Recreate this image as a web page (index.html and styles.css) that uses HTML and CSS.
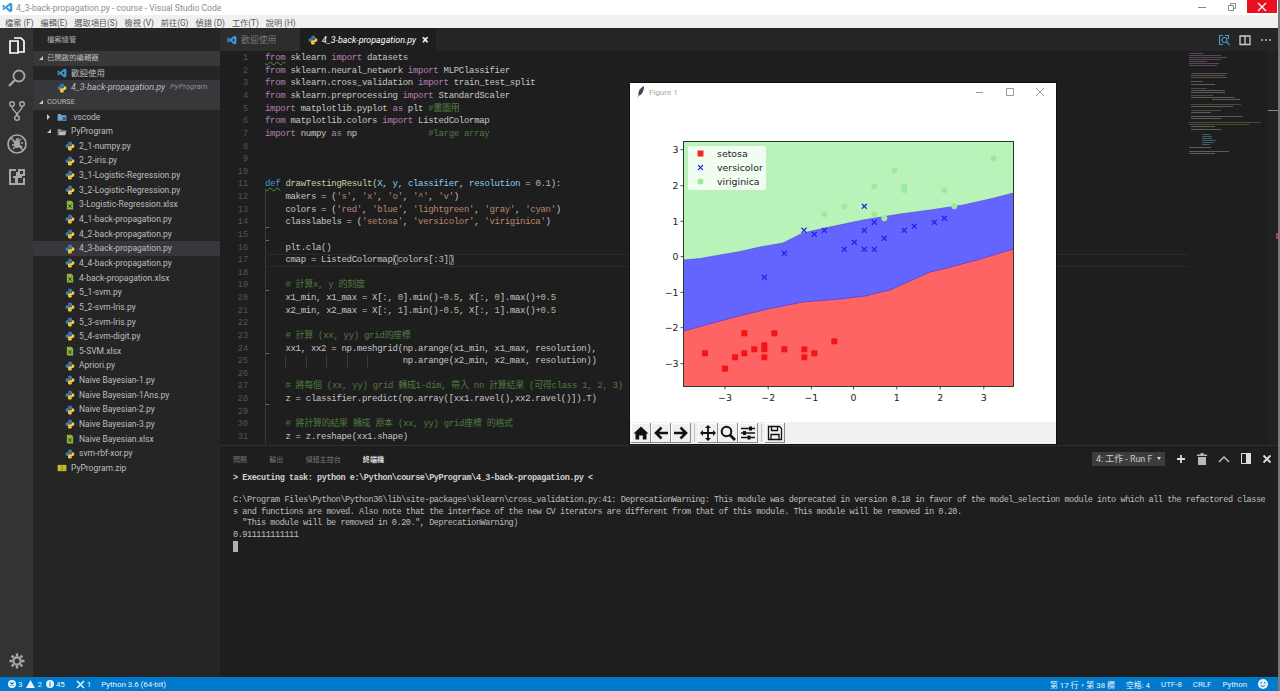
FILE: index.html
```html
<!DOCTYPE html>
<html lang="zh-Hant">
<head>
    <meta charset="UTF-8">
    <title>4_3-back-propagation.py - course - Visual Studio Code</title>
    <link rel="stylesheet" href="styles.css">
</head>
<body>
    <!-- shared icons -->
    <svg class="defs" aria-hidden="true">
        <symbol id="py" viewBox="0 0 16 16">
            <path fill="#3f7fb5" d="M8 1C5.400 1 5 2 5 3v1.500h3.200V5H3.400C2 5 1 6.200 1 8s1 3 2.300 3h1.300V9.600c0-1.200.9-2 2-2h2.900c1 0 1.600-.7 1.600-1.600V3c0-1.200-1.200-2-3.100-2z"/>
            <path fill="#f5cf3c" d="M8 15c2.600 0 3-1 3-2v-1.500H7.800V11h4.800c1.400 0 2.400-1.200 2.400-3s-1-3-2.300-3h-1.300v1.400c0 1.200-.9 2-2 2H6.500c-1 0-1.600.7-1.600 1.600V13c0 1.200 1.200 2 3.100 2z"/>
        </symbol>
        <symbol id="xl" viewBox="0 0 16 16">
            <path fill="#8bb53f" d="M3 1h7l3 3v11H3z"/>
            <path stroke="#25361a" stroke-width="1.500" d="M5.500 7l5 5.500M10.500 7l-5 5.500"/>
        </symbol>
        <symbol id="vs" viewBox="0 0 16 16">
            <path fill="#3d9ad9" d="M11.500 1L15 2.500v11L11.500 15 5 9.500 2 12 1 11.300V4.700L2 4l3 2.500zM11.500 5L8 8l3.500 3zM2.500 6.500v3L4 8z"/>
        </symbol>
        <symbol id="x" viewBox="-3 -3 6 6">
            <path stroke="#2222e8" stroke-width="1.300" d="M-2.600-2.600L2.600 2.600M-2.600 2.600L2.600-2.600"/>
        </symbol>
    </svg>

    <div class="app">
        <div class="titlebar">
            <svg class="title-icon"><use href="#vs"/></svg>
            <span class="title-text">4_3-back-propagation.py - course - Visual Studio Code</span>
            <div class="win-btns">
                <span class="win-btn"><svg width="10" height="10"><path stroke="#888" d="M1 5.500h8"/></svg></span>
                <span class="win-btn"><svg width="10" height="10" fill="none"><path stroke="#888" d="M1.500 3.500h5v5h-5zM3.500 3V1.500h5v5H7"/></svg></span>
                <span class="win-btn win-close"><svg width="10" height="10"><path stroke="#fff" stroke-width="1.200" d="M1 1l8 8M9 1L1 9"/></svg></span>
            </div>
        </div>
        <div class="menubar">
            <span>檔案 (F)</span><span>編輯(E)</span><span>選取項目(S)</span><span>檢視 (V)</span><span>前往(G)</span><span>偵錯 (D)</span><span>工作(T)</span><span>說明 (H)</span>
        </div>

        <div class="main">
            <div class="activity">
                <div class="act-item act-on">
                    <svg width="20" height="20" fill="none" stroke="currentColor" stroke-width="1.700"><path d="M7 3h7l3 3v11H11M3 6h8v12H3z"/></svg>
                </div>
                <div class="act-item">
                    <svg width="20" height="20" fill="none" stroke="currentColor" stroke-width="1.800"><circle cx="12" cy="8" r="5.500"/><path d="M8 12l-6 6" stroke-width="2.400"/></svg>
                </div>
                <div class="act-item">
                    <svg width="20" height="22" fill="none" stroke="currentColor" stroke-width="1.500"><circle cx="5" cy="4" r="2.300"/><circle cx="15" cy="4" r="2.300"/><circle cx="10" cy="18" r="2.300"/><path d="M5 6.500c0 5 5 4 5 9.200M15 6.500c0 5-5 4-5 9.200"/></svg>
                </div>
                <div class="act-item">
                    <svg width="22" height="22" fill="none" stroke="currentColor"><circle cx="11" cy="11" r="9" stroke-width="1.700"/><path stroke-width="1.500" d="M5 5l12 12M7 8l2 1M6 12h3M7 16l2-2M15 6l-2 2M13 5.500l-3 1M17 10h-2M16 14l-2-1"/><ellipse cx="11" cy="11" rx="3" ry="4" fill="currentColor" stroke="none"/></svg>
                </div>
                <div class="act-item">
                    <svg width="20" height="20" fill="currentColor"><path fill-rule="evenodd" d="M2 2h7v3h2V2h7v7h-3v2h3v7H2zM4 4v12h4v-5H6V9h3V4zM11 11v5h5v-5zM13 4v3h3V4z"/></svg>
                </div>
                <div class="act-item act-gear">
                    <svg width="16" height="16" fill="none" stroke="currentColor"><circle cx="8" cy="8" r="3.600" stroke-width="2.200"/><path stroke-width="2.400" d="M8 .5v3M8 12.500v3M.5 8h3M12.500 8h3M2.700 2.700l2 2M11.300 11.300l2 2M2.700 13.300l2-2M11.300 4.700l2-2"/></svg>
                </div>
            </div>

            <div class="sidebar">
                <div class="side-head">檔案總管</div>
                <div class="section"><i class="arrow-open"></i>已開啟的編輯器</div>
                <div class="row lv1"><svg class="ico"><use href="#vs"/></svg>歡迎使用</div>
                <div class="row lv1 row-on open-file"><svg class="ico"><use href="#py"/></svg>4_3-back-propagation.py<span class="row-dir">PyProgram</span></div>
                <div class="section"><i class="arrow-open"></i>COURSE</div>
                <div class="row lv1"><i class="arrow-closed"></i><svg class="ico" viewBox="0 0 16 16"><path fill="#6aa9dc" d="M1 3h5l1 2h8v9H1z"/><path fill="#2d5f8c" d="M9 8h5v5H9z"/></svg>.vscode</div>
                <div class="row lv1"><i class="arrow-open"></i><svg class="ico" viewBox="0 0 16 16"><path fill="#8a8a8a" d="M1 3h5l1 2h8v2H4l-2 6H1z"/><path fill="#bdbdbd" d="M4 7h11l-2 6H2z"/></svg>PyProgram</div>
                <div class="row lv2"><svg class="ico"><use href="#py"/></svg>2_1-numpy.py</div>
                <div class="row lv2"><svg class="ico"><use href="#py"/></svg>2_2-iris.py</div>
                <div class="row lv2"><svg class="ico"><use href="#py"/></svg>3_1-Logistic-Regression.py</div>
                <div class="row lv2"><svg class="ico"><use href="#py"/></svg>3_2-Logistic-Regression.py</div>
                <div class="row lv2"><svg class="ico"><use href="#xl"/></svg>3-Logistic-Regression.xlsx</div>
                <div class="row lv2"><svg class="ico"><use href="#py"/></svg>4_1-back-propagation.py</div>
                <div class="row lv2"><svg class="ico"><use href="#py"/></svg>4_2-back-propagation.py</div>
                <div class="row lv2 row-on"><svg class="ico"><use href="#py"/></svg>4_3-back-propagation.py</div>
                <div class="row lv2"><svg class="ico"><use href="#py"/></svg>4_4-back-propagation.py</div>
                <div class="row lv2"><svg class="ico"><use href="#xl"/></svg>4-back-propagation.xlsx</div>
                <div class="row lv2"><svg class="ico"><use href="#py"/></svg>5_1-svm.py</div>
                <div class="row lv2"><svg class="ico"><use href="#py"/></svg>5_2-svm-Iris.py</div>
                <div class="row lv2"><svg class="ico"><use href="#py"/></svg>5_3-svm-Iris.py</div>
                <div class="row lv2"><svg class="ico"><use href="#py"/></svg>5_4-svm-digit.py</div>
                <div class="row lv2"><svg class="ico"><use href="#xl"/></svg>5-SVM.xlsx</div>
                <div class="row lv2"><svg class="ico"><use href="#py"/></svg>Apriori.py</div>
                <div class="row lv2"><svg class="ico"><use href="#py"/></svg>Naive Bayesian-1.py</div>
                <div class="row lv2"><svg class="ico"><use href="#py"/></svg>Naive Bayesian-1Ans.py</div>
                <div class="row lv2"><svg class="ico"><use href="#py"/></svg>Naive Bayesian-2.py</div>
                <div class="row lv2"><svg class="ico"><use href="#py"/></svg>Naive Bayesian-3.py</div>
                <div class="row lv2"><svg class="ico"><use href="#xl"/></svg>Naive Bayesian.xlsx</div>
                <div class="row lv2"><svg class="ico"><use href="#py"/></svg>svm-rbf-xor.py</div>
                <div class="row lv1"><svg class="ico" viewBox="0 0 16 16"><path fill="#c9b52e" d="M1 3h14v10H1z"/><path fill="#5c5214" d="M7 5h2v1H7zM7 7h2v1H7zM7 9h2v2H7z"/></svg>PyProgram.zip</div>
            </div>

            <div class="workbench">
                <div class="tabs">
                    <div class="tab"><svg class="ico"><use href="#vs"/></svg>歡迎使用</div>
                    <div class="tab tab-on"><svg class="ico"><use href="#py"/></svg>4_3-back-propagation.py<span class="tab-x">×</span></div>
                    <div class="tab-actions">
                        <svg width="12" height="12" fill="none" stroke="#4b9ac9" stroke-width="1.100"><path d="M5 1.500H1.500v9H5M7 1.500h3.500V5"/><circle cx="6.500" cy="6" r="2.500"/><path d="M8.500 8l3 3"/></svg>
                        <svg width="12" height="12" fill="none" stroke="#ccc" stroke-width="1.300"><path d="M1 2h10v8.500H1zM6 2v8.500"/></svg>
                        <svg width="12" height="12" fill="#bbb"><circle cx="2" cy="6" r="1"/><circle cx="6" cy="6" r="1"/><circle cx="10" cy="6" r="1"/></svg>
                    </div>
                </div>

                <div class="editor">
                    <div class="code">
<div class="line"><span class="num">1</span><code><span class="k sq">from</span> sklearn <span class="k">import</span> datasets</code></div>
<div class="line"><span class="num">2</span><code><span class="k">from</span> sklearn.neural_network <span class="k">import</span> MLPClassifier</code></div>
<div class="line"><span class="num">3</span><code><span class="k">from</span> sklearn.cross_validation <span class="k">import</span> train_test_split</code></div>
<div class="line"><span class="num">4</span><code><span class="k">from</span> sklearn.preprocessing <span class="k">import</span> StandardScaler</code></div>
<div class="line"><span class="num">5</span><code><span class="k">import</span> matplotlib.pyplot <span class="k">as</span> plt <span class="c">#畫圖用</span></code></div>
<div class="line"><span class="num">6</span><code><span class="k">from</span> matplotlib.colors <span class="k">import</span> ListedColormap</code></div>
<div class="line"><span class="num">7</span><code><span class="k">import</span> numpy <span class="k">as</span> np              <span class="c">#large array</span></code></div>
<div class="line"><span class="num">8</span><code></code></div>
<div class="line"><span class="num">9</span><code></code></div>
<div class="line"><span class="num">10</span><code></code></div>
<div class="line"><span class="num">11</span><code><span class="d sq">def</span> <span class="f">drawTestingResult</span>(<span class="p">X</span>, <span class="p">y</span>, <span class="p">classifier</span>, <span class="p">resolution</span> = <span class="n">0.1</span>):</code></div>
<div class="line"><span class="num">12</span><code><span class="g">    </span>makers = (<span class="s">'s'</span>, <span class="s">'x'</span>, <span class="s">'o'</span>, <span class="s">'^'</span>, <span class="s">'v'</span>)</code></div>
<div class="line"><span class="num">13</span><code><span class="g">    </span>colors = (<span class="s">'red'</span>, <span class="s">'blue'</span>, <span class="s">'lightgreen'</span>, <span class="s">'gray'</span>, <span class="s">'cyan'</span>)</code></div>
<div class="line"><span class="num">14</span><code><span class="g tick">    </span>classlabels = (<span class="s">'setosa'</span>, <span class="s">'versicolor'</span>, <span class="s">'viriginica'</span>)</code></div>
<div class="line"><span class="num">15</span><code><span class="g tick">    </span></code></div>
<div class="line"><span class="num">16</span><code><span class="g">    </span>plt.cla()</code></div>
<div class="line line-on"><span class="num">17</span><code><span class="g">    </span>cmap = ListedColormap<span class="br">(</span>colors[:<span class="n">3</span>]<span class="br">)</span></code></div>
<div class="line"><span class="num">18</span><code><span class="g">    </span></code></div>
<div class="line"><span class="num">19</span><code><span class="g tick">    </span><span class="c"># 計算x, y 的刻度</span></code></div>
<div class="line"><span class="num">20</span><code><span class="g">    </span>x1_min, x1_max = X[:, <span class="n">0</span>].min()-<span class="n">0.5</span>, X[:, <span class="n">0</span>].max()+<span class="n">0.5</span></code></div>
<div class="line"><span class="num">21</span><code><span class="g">    </span>x2_min, x2_max = X[:, <span class="n">1</span>].min()-<span class="n">0.5</span>, X[:, <span class="n">1</span>].max()+<span class="n">0.5</span></code></div>
<div class="line"><span class="num">22</span><code><span class="g">    </span></code></div>
<div class="line"><span class="num">23</span><code><span class="g">    </span><span class="c"># 計算 (xx, yy) grid的座標</span></code></div>
<div class="line"><span class="num">24</span><code><span class="g tick">    </span>xx1, xx2 = np.meshgrid(np.arange(x1_min, x1_max, resolution),</code></div>
<div class="line"><span class="num">25</span><code><span class="g">    </span><span class="g">    </span><span class="g">    </span><span class="g">    </span><span class="g">    </span><span class="g">    </span>   np.arange(x2_min, x2_max, resolution))</code></div>
<div class="line"><span class="num">26</span><code><span class="g">    </span></code></div>
<div class="line"><span class="num">27</span><code><span class="g">    </span><span class="c"># 將每個 (xx, yy) grid 轉成1-dim, 帶入 nn 計算結果 (可得class 1, 2, 3)</span></code></div>
<div class="line"><span class="num">28</span><code><span class="g tick">    </span>z = classifier.predict(np.array([xx1.ravel(),xx2.ravel()]).T)</code></div>
<div class="line"><span class="num">29</span><code><span class="g">    </span></code></div>
<div class="line"><span class="num">30</span><code><span class="g">    </span><span class="c"># 將計算的結果 轉成 原本 (xx, yy) grid座標 的格式</span></code></div>
<div class="line"><span class="num">31</span><code><span class="g">    </span>z = z.reshape(xx1.shape)</code></div>
                    </div>
                    <svg class="minimap" width="80" height="110">
                        <g fill="#8a6a86"><rect x="1" y="2" width="14" height="1"/><rect x="1" y="4" width="32" height="1"/><rect x="1" y="6" width="38" height="1"/><rect x="1" y="8" width="32" height="1"/><rect x="1" y="10" width="18" height="1"/><rect x="1" y="12" width="30" height="1"/><rect x="1" y="14" width="28" height="1"/></g>
                        <g fill="#8f7a6c"><rect x="3" y="22" width="36" height="1"/><rect x="3" y="24" width="34" height="1"/><rect x="3" y="26" width="36" height="1"/></g>
                        <g fill="#909090"><rect x="3" y="30" width="12" height="1"/><rect x="3" y="33" width="24" height="1"/><rect x="3" y="39" width="34" height="1"/><rect x="3" y="41" width="34" height="1"/><rect x="3" y="46" width="44" height="1"/><rect x="24" y="48" width="28" height="1"/></g>
                        <g fill="#5e7a4c"><rect x="3" y="37" width="16" height="1"/><rect x="3" y="44" width="22" height="1"/><rect x="3" y="53" width="50" height="1"/><rect x="3" y="59" width="30" height="1"/></g>
                        <g fill="#909090"><rect x="3" y="55" width="42" height="1"/><rect x="3" y="61" width="20" height="1"/><rect x="3" y="65" width="52" height="1"/><rect x="3" y="67" width="30" height="1"/><rect x="3" y="75" width="24" height="1"/><rect x="3" y="78" width="30" height="1"/></g>
                        <g fill="#5e7a4c"><rect x="1" y="71" width="72" height="1"/><rect x="1" y="73" width="60" height="1"/></g>
                        <g fill="#5a8fb0"><rect x="14" y="83" width="8" height="1"/><rect x="14" y="85" width="10" height="1"/><rect x="14" y="87" width="10" height="1"/><rect x="14" y="89" width="14" height="1"/><rect x="14" y="91" width="12" height="1"/><rect x="14" y="93" width="8" height="1"/></g>
                        <g fill="#909090"><rect x="1" y="96" width="22" height="1"/><rect x="1" y="100" width="40" height="1"/><rect x="1" y="102" width="26" height="1"/></g>
                    </svg>
                    <div class="ruler">
                        <i class="ruler-cur"></i>
                        <i class="ruler-mark"></i>
                    </div>
                </div>

                <div class="panel">
                    <div class="panel-head">
                        <span>問題</span><span>輸出</span><span>偵錯主控台</span><span class="panel-on">終端機</span>
                        <div class="panel-actions">
                            <span class="term-select">4: 工作 - Run F<i></i></span>
                            <svg width="10" height="10" stroke="#ddd" stroke-width="1.800"><path d="M5 1v8M1 5h8"/></svg>
                            <svg width="10" height="12" fill="#bbb"><path d="M3.500 0h3v1.500H10v1.500H0V1.500h3.500zM1 4h8v8H1z"/></svg>
                            <svg width="12" height="8" fill="none" stroke="#ccc" stroke-width="1.300"><path d="M1 7l5-5 5 5"/></svg>
                            <svg width="10" height="11" fill="#ddd"><path fill-rule="evenodd" d="M0 0h10v11H0zM1 1v9h4V1z"/></svg>
                            <svg width="10" height="10" stroke="#ddd" stroke-width="1.800"><path d="M1.500 1.500l7 7M8.500 1.500l-7 7"/></svg>
                        </div>
                    </div>
<pre class="terminal"><b>&gt; Executing task: python e:\Python\course\PyProgram\4_3-back-propagation.py &lt;</b>

C:\Program Files\Python\Python36\lib\site-packages\sklearn\cross_validation.py:41: DeprecationWarning: This module was deprecated in version 0.18 in favor of the model_selection module into which all the refactored classe
s and functions are moved. Also note that the interface of the new CV iterators are different from that of this module. This module will be removed in 0.20.
  "This module will be removed in 0.20.", DeprecationWarning)
0.911111111111
<i class="term-cursor"></i></pre>
                </div>
            </div>
        </div>

        <div class="statusbar">
            <span class="st-group">
                <svg width="8" height="8"><circle cx="4" cy="4" r="4" fill="#e8f2fa"/><path stroke="#007acc" stroke-width="1.200" d="M2.500 2.500l3 3M5.500 2.500l-3 3"/></svg>3
                <svg width="9" height="8"><path fill="#e8f2fa" d="M4.500 0L9 8H0z"/></svg>2
                <svg width="8" height="8"><circle cx="4" cy="4" r="4" fill="#e8f2fa"/><path stroke="#007acc" d="M4 3v3.500M4 1.500v1"/></svg>45
            </span>
            <span class="st-group st-tools">
                <svg width="9" height="9" stroke="#e8f2fa" stroke-width="1.500"><path d="M1 1l7 7M8 1L1 8"/></svg>1
            </span>
            <span class="st-python">Python 3.6 (64-bit)</span>
            <div class="st-right">
                <span>第 17 行，第 38 欄</span><span>空格: 4</span><span>UTF-8</span><span>CRLF</span><span>Python</span>
                <svg width="10" height="10"><circle cx="5" cy="5" r="5" fill="#e8f2fa"/><circle cx="3.400" cy="3.800" r=".8" fill="#007acc"/><circle cx="6.600" cy="3.800" r=".8" fill="#007acc"/><path fill="none" stroke="#007acc" d="M2.500 6c1 1.800 4 1.800 5 0"/></svg>
            </div>
        </div>
    </div>

    <!-- matplotlib window floats over the editor -->
    <div class="figure">
        <div class="fig-title">
            <svg width="8" height="12"><path fill="#3a4a5c" d="M7 0C3 2 1 5 1.500 9L.5 12l1.500-2.500C5 9 7 5 7 0z"/></svg>
            <span>Figure 1</span>
            <div class="fig-btns">
                <svg width="10" height="10"><path stroke="#999" d="M1 5.500h7"/></svg>
                <svg width="10" height="10" fill="none"><path stroke="#999" d="M1.500 1.500h7v7h-7z"/></svg>
                <svg width="10" height="10"><path stroke="#999" d="M1 1l8 8M9 1L1 9"/></svg>
            </div>
        </div>
        <!-- viewBox uses the coordinates of the whole window -->
        <svg class="plot" viewBox="630 101 426 321" width="426" height="321">
            <rect x="683.500" y="141.500" width="330" height="245" fill="#b9f3b9"/>
            <path fill="#6464fe" stroke="#4a4ae0" stroke-width=".6" d="M683.500 260L700 258.500 720 255 740 251.500 760 247 783 243 803 233 825 228 863 220 900 214 930 210 963 205 990 199 1013.500 193V386.500H683.500z"/>
            <path fill="#ff6464" d="M683.500 331L700 326.500 720 321 743 315 770 308.500 803 302 840 299 865 296 890 290 910 281 930 272 945 268.500 977 260 1000 253 1013.500 249V386.500H683.500z"/>
            <path fill="none" stroke="#5b3fd0" stroke-width=".8" d="M683.500 331L700 326.500 720 321 743 315 770 308.500 803 302 840 299 865 296 890 290 910 281 930 272 945 268.500 977 260 1000 253 1013.500 249"/>
            <g fill="#9dea9d">
                <circle cx="824.300" cy="214.300" r="3"/><circle cx="844.300" cy="206.300" r="3"/><circle cx="874.300" cy="186.300" r="3"/><circle cx="874.300" cy="214.300" r="3"/><circle cx="884.300" cy="218.300" r="3"/><circle cx="894.300" cy="170.300" r="3"/><circle cx="904.300" cy="186.300" r="3"/><circle cx="904.300" cy="190.300" r="3"/><circle cx="944.300" cy="190.300" r="3"/><circle cx="954.300" cy="206.300" r="3"/><circle cx="993.700" cy="158.300" r="3"/>
            </g>
            <g>
                <use href="#x" x="781.300" y="250.300" width="6" height="6"/><use href="#x" x="801" y="227.300" width="6" height="6"/><use href="#x" x="811.300" y="231.300" width="6" height="6"/><use href="#x" x="821.300" y="227.300" width="6" height="6"/><use href="#x" x="841.300" y="246.300" width="6" height="6"/><use href="#x" x="851.300" y="239.300" width="6" height="6"/><use href="#x" x="861.300" y="203.300" width="6" height="6"/><use href="#x" x="861.300" y="227.300" width="6" height="6"/><use href="#x" x="861.300" y="246.300" width="6" height="6"/><use href="#x" x="871.300" y="219.300" width="6" height="6"/><use href="#x" x="871.300" y="246.300" width="6" height="6"/><use href="#x" x="881.300" y="235.300" width="6" height="6"/><use href="#x" x="901.300" y="227.300" width="6" height="6"/><use href="#x" x="911.300" y="223.300" width="6" height="6"/><use href="#x" x="931.300" y="219.300" width="6" height="6"/><use href="#x" x="941.300" y="215.300" width="6" height="6"/><use href="#x" x="761.300" y="274.300" width="6" height="6"/>
            </g>
            <g fill="#f51414">
                <rect x="702" y="350.300" width="6" height="6"/><rect x="722" y="365.700" width="6" height="6"/><rect x="732" y="354.300" width="6" height="6"/><rect x="741.300" y="330.300" width="6" height="6"/><rect x="741.300" y="350.300" width="6" height="6"/><rect x="751.300" y="346.300" width="6" height="6"/><rect x="761.300" y="342.300" width="6" height="6"/><rect x="761.300" y="346.300" width="6" height="6"/><rect x="761.300" y="354.300" width="6" height="6"/><rect x="771.300" y="330.300" width="6" height="6"/><rect x="781.300" y="346.300" width="6" height="6"/><rect x="801.300" y="346.300" width="6" height="6"/><rect x="801.300" y="354.300" width="6" height="6"/><rect x="811.300" y="350.300" width="6" height="6"/><rect x="831.300" y="338.300" width="6" height="6"/>
            </g>
            <rect x="683.500" y="141.500" width="330" height="245" fill="none" stroke="#2b3a2b" stroke-width="1"/>
            <!-- legend -->
            <rect x="688" y="146" width="78" height="44" rx="2" fill="#fff" fill-opacity=".8"/>
            <rect x="697.500" y="150.500" width="6" height="6" fill="#f52828"/>
            <use href="#x" x="697.500" y="164.500" width="6" height="6"/>
            <circle cx="700.500" cy="181.500" r="3" fill="#9dea9d"/>
            <g class="plot-text">
                <text x="717" y="156.500">setosa</text>
                <text x="717" y="170.500">versicolor</text>
                <text x="717" y="184.500">viriginica</text>
            </g>
            <!-- ticks -->
            <path fill="none" stroke="#222" stroke-width=".8" d="M725 386.500v3M768.200 386.500v3M811.400 386.500v3M853.500 386.500v3M896.800 386.500v3M940.200 386.500v3M983.800 386.500v3M683.500 149.700h-3M683.500 185.700h-3M683.500 221.300h-3M683.500 256.700h-3M683.500 292.300h-3M683.500 327.700h-3M683.500 363.700h-3"/>
            <g class="plot-text tick-x">
                <text x="725" y="401">−3</text><text x="768.200" y="401">−2</text><text x="811.400" y="401">−1</text><text x="853.500" y="401">0</text><text x="896.800" y="401">1</text><text x="940.200" y="401">2</text><text x="983.800" y="401">3</text>
            </g>
            <g class="plot-text tick-y">
                <text x="678.500" y="153">3</text><text x="678.500" y="189">2</text><text x="678.500" y="224.600">1</text><text x="678.500" y="260">0</text><text x="678.500" y="295.600">−1</text><text x="678.500" y="331">−2</text><text x="678.500" y="367">−3</text>
            </g>
        </svg>
        <div class="fig-toolbar">
            <span class="tb-btn"><svg width="16" height="16"><path fill="#111" d="M8 1.500L15.500 8.500 13.500 8.500V14.500H9.800V10.500H6.200V14.500H2.500V8.500H.5z"/></svg></span>
            <span class="tb-btn"><svg width="16" height="16" fill="none" stroke="#111" stroke-width="2.600"><path d="M15 8H3M8.500 2.500L3 8l5.500 5.500"/></svg></span>
            <span class="tb-btn"><svg width="16" height="16" fill="none" stroke="#111" stroke-width="2.600"><path d="M1 8h12M7.500 2.500L13 8l-5.500 5.500"/></svg></span>
            <i class="tb-sep"></i>
            <span class="tb-btn"><svg width="16" height="16"><path stroke="#111" stroke-width="1.800" d="M8 1v14M1 8h14"/><path fill="#111" d="M8 0l3 3H5zM8 16l3-3H5zM0 8l3-3v6zM16 8l-3-3v6z"/></svg></span>
            <span class="tb-btn"><svg width="16" height="16" fill="none" stroke="#111"><circle cx="6.500" cy="6.500" r="4.800" stroke-width="2"/><path stroke-width="2.800" d="M10 10l5 5"/></svg></span>
            <span class="tb-btn"><svg width="16" height="16" stroke="#111" stroke-width="1.400"><path d="M1 3.500h14M1 8h14M1 12.500h14"/><path stroke-width="3" d="M10.500 1.500v4M4.500 6v4M9 10.500v4"/></svg></span>
            <i class="tb-sep"></i>
            <span class="tb-btn"><svg width="16" height="16" fill="none" stroke="#111" stroke-width="1.300"><path d="M1.500 1.500h11l2 2v11h-13z"/><path d="M4.500 1.500v4h6v-4M4 14.500v-5h8v5"/></svg></span>
        </div>
    </div>
</body>
</html>
```

FILE: styles.css
```css
/* base */
html, body {
    margin: 0;
    padding: 0;
    height: 691px;
    overflow: hidden;
    background-color: #77797c;
}

body {
    font-family: Roboto, "Noto Sans CJK TC", sans-serif;
    font-size: 9px;
    position: relative;
}

.defs {
    position: absolute;
    width: 0;
    height: 0;
}

.app {
    width: 1278px;
    height: 691px;
    display: flex;
    flex-direction: column;
}

/* window chrome */
.titlebar {
    height: 15px;
    background-color: #fff;
    display: flex;
    align-items: center;
    color: #8c8c8c;
}

.title-icon {
    width: 11px;
    height: 11px;
    margin: 0 3px 0 2px;
}

.title-text {
    font-size: 8.6px;
}

.win-btns {
    margin-left: auto;
    display: flex;
    align-self: flex-start;
    height: 13px;
    padding-right: 1px;
}

.win-btn {
    width: 30px;
    height: 13px;
    display: flex;
    align-items: center;
    justify-content: center;
}

.win-close {
    background-color: #e81123;
}

.menubar {
    height: 13px;
    background-color: #f0f0f0;
    color: #555;
    display: flex;
    align-items: center;
    font-size: 8.2px;
    padding-left: 5px;
    gap: 7px;
}

.main {
    flex: 1;
    display: flex;
    min-height: 0;
}

/* activity bar */
.activity {
    width: 33px;
    background-color: #333;
    display: flex;
    flex-direction: column;
    flex-shrink: 0;
}

.act-item {
    height: 33px;
    display: flex;
    align-items: center;
    justify-content: center;
    color: #a8a8a8;
}

.act-on {
    color: #fff;
}

.act-gear {
    margin-top: auto;
}

/* sidebar */
.sidebar {
    width: 187px;
    background-color: #252526;
    color: #bdbdbd;
    flex-shrink: 0;
    font-size: 8.5px;
}

.side-head {
    height: 23px;
    line-height: 23px;
    padding-left: 14px;
    font-size: 7.3px;
    color: #aaa;
}

.section {
    height: 14.65px;
    line-height: 14.65px;
    background-color: #383838;
    color: #bbb;
    font-size: 7.4px;
    padding-left: 14px;
    position: relative;
}

.row {
    height: 14.65px;
    line-height: 14.65px;
    white-space: nowrap;
    position: relative;
    display: flex;
    align-items: center;
}

.row-on {
    background-color: #37373d;
}

.lv1 {
    padding-left: 24px;
}

.lv2 {
    padding-left: 32px;
}

.open-file {
    font-style: italic;
    font-size: 8.9px;
}

.row-dir {
    margin-left: 5px;
    font-size: 7.8px;
    color: #8e8e8e;
}

.ico {
    width: 10px;
    height: 10px;
    margin-right: 4px;
    flex-shrink: 0;
}

.arrow-open, .arrow-closed {
    position: absolute;
    width: 0;
    height: 0;
    top: 5px;
}

.arrow-open {
    left: 6px;
    border-left: 4px solid transparent;
    border-bottom: 4px solid #c8c8c8;
}

.arrow-closed {
    left: 14px;
    top: 4px;
    border-top: 3px solid transparent;
    border-bottom: 3px solid transparent;
    border-left: 3px solid #c8c8c8;
}

.row .arrow-open {
    left: 14px;
}

/* editor */
.workbench {
    flex: 1;
    min-width: 0;
    display: flex;
    flex-direction: column;
    background-color: #1e1e1e;
}

.tabs {
    height: 23px;
    background-color: #252526;
    display: flex;
    align-items: stretch;
    font-size: 8.9px;
    flex-shrink: 0;
}

.tab {
    display: flex;
    align-items: center;
    white-space: nowrap;
    padding: 0 17px 0 7px;
    width: 56px;
    color: #777;
    background-color: #2d2d2d;
}

.tab-on {
    width: auto;
    padding: 0 8px 0 8px;
    background-color: #1e1e1e;
    color: #fff;
    font-style: italic;
}

.tab-x {
    font-style: normal;
    font-weight: bold;
    font-size: 12px;
    line-height: 1;
    margin-left: 6px;
}

.tab-actions {
    margin-left: auto;
    display: flex;
    align-items: center;
    gap: 9px;
    padding-right: 6px;
}

.editor {
    height: 395px;
    display: flex;
    flex-shrink: 0;
    border-bottom: 1px solid #2f2f2f;
    box-sizing: border-box;
}

.code {
    flex: 1;
    min-width: 0;
    padding-top: 1.2px;
    font-family: "Liberation Mono", monospace;
    font-size: 9px;
    line-height: 12.63px;
    color: #c6c6c6;
}

.line {
    display: flex;
    height: 12.63px;
    white-space: pre;
}

.num {
    width: 28px;
    margin-right: 17px;
    text-align: right;
    font-size: 8.5px;
    color: #555;
    flex-shrink: 0;
}

.line code {
    font-family: "Liberation Mono", "Noto Sans CJK TC", monospace;
    letter-spacing: -0.3px;
    flex: 1;
    min-width: 0;
    box-sizing: border-box;
}

.line-on code {
    border-top: 1px solid #2b2b2b;
    border-bottom: 1px solid #2b2b2b;
    line-height: 10.63px;
}

.k { color: #b77eb2; }
.d { color: #4f91c8; }
.f { color: #cfcfa0; }
.p { color: #8fcdf0; }
.s { color: #bd8770; }
.n { color: #a8bf9c; }
.c { color: #4f7a40; }

.sq {
    text-decoration: underline wavy #3f9a3f 1px;
    text-underline-offset: 1px;
}

.g {
    box-shadow: inset 1px 0 0 #3a3a3a;
    position: relative;
    display: inline-block;
    height: 12.63px;
    vertical-align: top;
}

.line-on .g {
    height: 10.63px;
}

.tick::after {
    content: "";
    position: absolute;
    left: 1px;
    bottom: 1px;
    width: 3px;
    height: 1px;
    background-color: #3f8a3f;
}

.br {
    box-shadow: inset 0 0 0 1px #666;
}

.minimap {
    width: 80px;
    flex-shrink: 0;
    opacity: 0.55;
}

.ruler {
    width: 10px;
    flex-shrink: 0;
    background-color: #212121;
    position: relative;
}

.ruler-cur {
    position: absolute;
    top: 59px;
    left: 0;
    width: 10px;
    height: 1px;
    background-color: #8a8a8a;
}

.ruler-mark {
    position: absolute;
    top: 182px;
    right: 0;
    width: 2px;
    height: 6px;
    background-color: #c03030;
}

/* panel */
.panel {
    flex: 1;
    min-height: 0;
    color: #bfbfbf;
}

.panel-head {
    height: 25px;
    display: flex;
    align-items: center;
    padding-left: 13px;
    font-size: 7.1px;
    color: #777;
    gap: 22px;
}

.panel-on {
    color: #ddd;
    font-weight: bold;
}

.panel-actions {
    margin-left: auto;
    display: flex;
    align-items: center;
    gap: 11px;
    padding-right: 6px;
}

.term-select {
    width: 69px;
    height: 14px;
    line-height: 14px;
    padding-left: 4px;
    background-color: #3c3c3c;
    color: #ccc;
    font-size: 8.9px;
    position: relative;
}

.term-select i {
    position: absolute;
    right: 4px;
    top: 5px;
    border-left: 2px solid transparent;
    border-right: 2px solid transparent;
    border-top: 3px solid #ddd;
}

.terminal {
    margin: 0;
    padding: 1.5px 0 0 13px;
    font-family: "Liberation Mono", monospace;
    font-size: 8.5px;
    letter-spacing: -0.43px;
    line-height: 11.4px;
    white-space: pre;
}

.terminal b {
    color: #d0d0d0;
}

.term-cursor {
    display: inline-block;
    width: 5px;
    height: 11px;
    background-color: #b0b0b0;
    vertical-align: top;
}

/* status bar */
.statusbar {
    height: 14px;
    background-color: #007acc;
    color: #e8f2fa;
    display: flex;
    align-items: center;
    font-size: 7.9px;
    padding-left: 6px;
    flex-shrink: 0;
}

.st-group {
    display: flex;
    align-items: center;
    gap: 2px;
}

.st-group svg {
    margin-left: 2px;
}

.st-tools {
    margin-left: 9px;
}

.st-python {
    margin-left: 10px;
}

.st-right {
    margin-left: auto;
    display: flex;
    align-items: center;
    gap: 11px;
    padding-right: 10px;
}

/* matplotlib figure */
.figure {
    position: absolute;
    left: 629px;
    top: 82px;
    width: 426px;
    height: 361px;
    background-color: #fff;
    border: 1px solid #111;
    display: flex;
    flex-direction: column;
}

.fig-title {
    height: 18px;
    display: flex;
    align-items: center;
    padding-left: 7px;
    gap: 4px;
    font-size: 8px;
    color: #a8a8a8;
}

.fig-btns {
    margin-left: auto;
    display: flex;
    gap: 20px;
    padding-right: 11px;
}

.plot {
    display: block;
    flex: none;
}

.plot-text {
    font-family: "DejaVu Sans", sans-serif;
    font-size: 9.4px;
    fill: #222;
}

.tick-x {
    text-anchor: middle;
}

.tick-y {
    text-anchor: end;
}

.fig-toolbar {
    height: 22px;
    background-color: #f0f0f0;
    display: flex;
    align-items: center;
    padding-left: 1px;
}

.tb-btn {
    width: 19px;
    height: 19px;
    display: flex;
    align-items: center;
    justify-content: center;
    border-right: 1px solid #8a8a8a;
    border-bottom: 1px solid #8a8a8a;
    box-shadow: inset 1px 1px 0 #fff;
}

.tb-sep {
    width: 1px;
    height: 18px;
    margin: 0 3px 0 3px;
    background-color: #c4c4c4;
}
```
